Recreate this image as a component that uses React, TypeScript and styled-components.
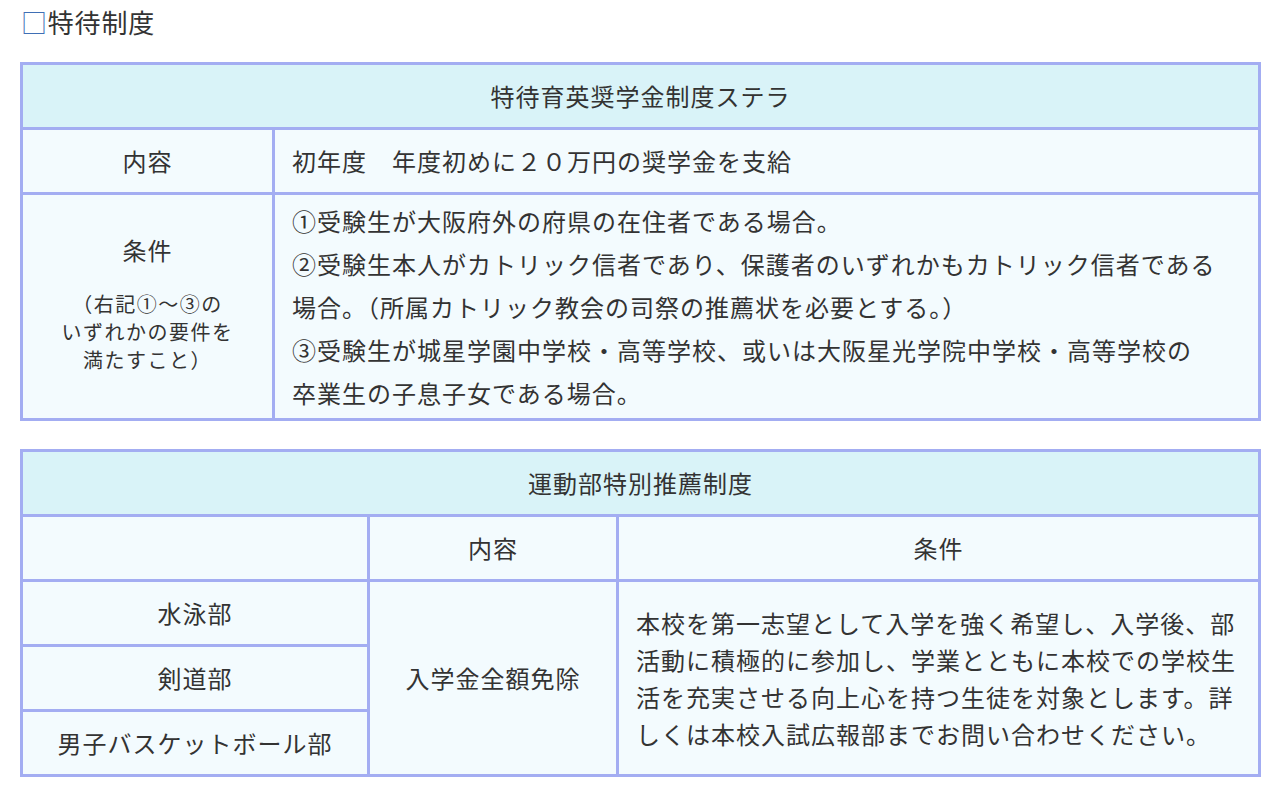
import React from 'react';
import styled, { createGlobalStyle } from 'styled-components';

const GlobalStyle = createGlobalStyle`
  html, body {
    margin: 0;
    padding: 0;
    background: #ffffff;
  }
  body {
    font-family: "Noto Sans CJK JP", "Noto Sans", sans-serif;
    color: #333333;
  }
`;

const Page = styled.div`
  padding: 4px 20px 12px 20px;
`;

const Heading = styled.h3`
  margin: 0 0 22px 1px;
  font-size: 26px;
  font-weight: 400;
  line-height: 36px;
  letter-spacing: 0.8px;
  color: #333;
`;

const Box = styled.span`
  color: #3f6fb5;
`;

const Table = styled.table`
  width: 1241px;
  border-collapse: collapse;
  border: 3px solid #a3adf2;
  margin-bottom: 28px;
  table-layout: fixed;
`;

const Cell = styled.td<{ $head?: boolean; $align?: 'left' | 'center' }>`
  border: 3px solid #a3adf2;
  background: ${({ $head }) => ($head ? '#d9f3f8' : '#f3fbfe')};
  text-align: ${({ $align }) => $align || 'center'};
  vertical-align: middle;
  font-size: 24px;
  letter-spacing: 1px;
  line-height: 36px;
  padding: 13px 17px;
  color: #333;
  white-space: nowrap;
`;

const LabelCell = styled(Cell)`
  padding-top: 4px;
  padding-bottom: 12px;
`;

const TextCell = styled(Cell)`
  padding-top: 0;
  padding-bottom: 0;
`;

const Lines = styled.div<{ $lh: number }>`
  line-height: ${({ $lh }) => $lh}px;
  padding: 4px 0;

  span {
    display: block;
  }
`;

const Note = styled.div`
  margin-top: 22px;
  font-size: 20px;
  letter-spacing: 1.5px;
  line-height: 28px;
`;

const conditions = [
  '①受験生が大阪府外の府県の在住者である場合。',
  '②受験生本人がカトリック信者であり、保護者のいずれかもカトリック信者である',
  '場合。（所属カトリック教会の司祭の推薦状を必要とする。）',
  '③受験生が城星学園中学校・高等学校、或いは大阪星光学院中学校・高等学校の',
  '卒業生の子息子女である場合。',
];

const sportsText = [
  '本校を第一志望として入学を強く希望し、入学後、部',
  '活動に積極的に参加し、学業とともに本校での学校生',
  '活を充実させる向上心を持つ生徒を対象とします。詳',
  'しくは本校入試広報部までお問い合わせください。',
];

const clubs = ['水泳部', '剣道部', '男子バスケットボール部'];

const App: React.FC = () => {
  return (
    <>
      <GlobalStyle />
      <Page>
        <Heading>
          <Box>□</Box>特待制度
        </Heading>

        <Table>
          <colgroup>
            <col style={{ width: 252 }} />
            <col />
          </colgroup>
          <tbody>
            <tr>
              <Cell $head colSpan={2}>特待育英奨学金制度ステラ</Cell>
            </tr>
            <tr>
              <Cell>内容</Cell>
              <Cell $align="left">初年度　年度初めに２０万円の奨学金を支給</Cell>
            </tr>
            <tr>
              <LabelCell>
                <div>条件</div>
                <Note>
                  （右記①～③の
                  <br />
                  いずれかの要件を
                  <br />
                  満たすこと）
                </Note>
              </LabelCell>
              <TextCell $align="left">
                <Lines $lh={43}>
                  {conditions.map((line) => (
                    <span key={line}>{line}</span>
                  ))}
                </Lines>
              </TextCell>
            </tr>
          </tbody>
        </Table>

        <Table>
          <colgroup>
            <col style={{ width: 347 }} />
            <col style={{ width: 249 }} />
            <col />
          </colgroup>
          <tbody>
            <tr>
              <Cell $head colSpan={3}>運動部特別推薦制度</Cell>
            </tr>
            <tr>
              <Cell />
              <Cell>内容</Cell>
              <Cell>条件</Cell>
            </tr>
            {clubs.map((club, i) => (
              <tr key={club}>
                <Cell>{club}</Cell>
                {i === 0 && (
                  <>
                    <Cell rowSpan={3}>入学金全額免除</Cell>
                    <TextCell rowSpan={3} $align="left">
                      <Lines $lh={37}>
                        {sportsText.map((line) => (
                          <span key={line}>{line}</span>
                        ))}
                      </Lines>
                    </TextCell>
                  </>
                )}
              </tr>
            ))}
          </tbody>
        </Table>
      </Page>
    </>
  );
};

export default App;
